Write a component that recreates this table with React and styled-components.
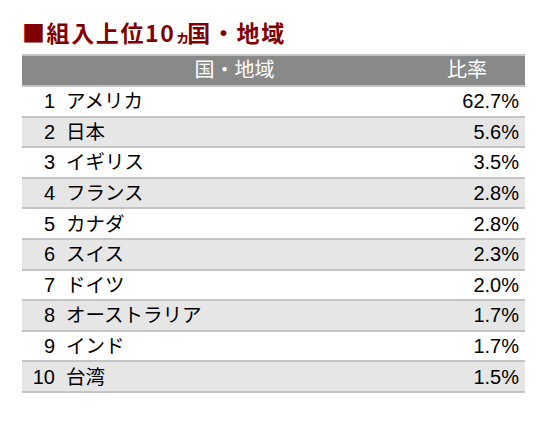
import React from 'react';
import styled, { createGlobalStyle } from 'styled-components';

const GlobalStyle = createGlobalStyle`
  html, body {
    margin: 0;
    padding: 0;
    background: #ffffff;
  }
  body {
    font-family: "Liberation Sans", "Noto Sans CJK JP", sans-serif;
  }
`;

const Page = styled.div`
  width: 560px;
  height: 428px;
  padding: 17px 35px 0 22px;
  box-sizing: border-box;
`;

const Title = styled.h2`
  margin: 0 0 3px 0;
  font-family: "Noto Sans CJK JP", sans-serif;
  font-size: 23px;
  line-height: 30px;
  font-weight: bold;
  color: #800000;
  letter-spacing: 1.6px;
  white-space: nowrap;
`;

const SmallKana = styled.span`
  font-size: 15px;
  letter-spacing: -3px;
`;

const Table = styled.div`
  width: 503px;
  border-top: 2px solid #c4c4c4;
`;

const HeadRow = styled.div`
  display: flex;
  align-items: center;
  height: 29px;
  line-height: 29px;
  background: #898989;
  border-bottom: 2px solid #c4c4c4;
  color: #ffffff;
  font-size: 20px;
  white-space: nowrap;
`;

const HeadCell = styled.div`
  flex: ${p => (p.$right ? '0 0 auto' : '1 1 auto')};
  text-align: center;
  margin-right: ${p => (p.$right ? '38px' : '0')};
`;

const Row = styled.div`
  display: grid;
  grid-template-columns: 33px 1fr auto;
  column-gap: 11px;
  align-items: center;
  height: 28.6px;
  line-height: 28px;
  background: ${p => (p.$shade ? '#e6e6e6' : '#ffffff')};
  border-bottom: 2px solid #c4c4c4;
  color: #000000;
  font-size: 20px;
`;

const Rank = styled.span`
  text-align: right;
`;

const Name = styled.span`
  white-space: nowrap;
  font-size: 19.5px;
`;

const Value = styled.span`
  text-align: right;
  padding-right: 6px;
`;

const data = [
  ['1', 'アメリカ', '62.7%'],
  ['2', '日本', '5.6%'],
  ['3', 'イギリス', '3.5%'],
  ['4', 'フランス', '2.8%'],
  ['5', 'カナダ', '2.8%'],
  ['6', 'スイス', '2.3%'],
  ['7', 'ドイツ', '2.0%'],
  ['8', 'オーストラリア', '1.7%'],
  ['9', 'インド', '1.7%'],
  ['10', '台湾', '1.5%'],
];

export default function App() {
  return (
    <Page>
      <GlobalStyle />
      <Title>
        ■組入上位10<SmallKana>ヵ</SmallKana>国・地域
      </Title>
      <Table>
        <HeadRow>
          <HeadCell>国・地域</HeadCell>
          <HeadCell $right>比率</HeadCell>
        </HeadRow>
        {data.map(([rank, name, value], i) => (
          <Row key={rank} $shade={i % 2 === 1}>
            <Rank>{rank}</Rank>
            <Name>{name}</Name>
            <Value>{value}</Value>
          </Row>
        ))}
      </Table>
    </Page>
  );
}
